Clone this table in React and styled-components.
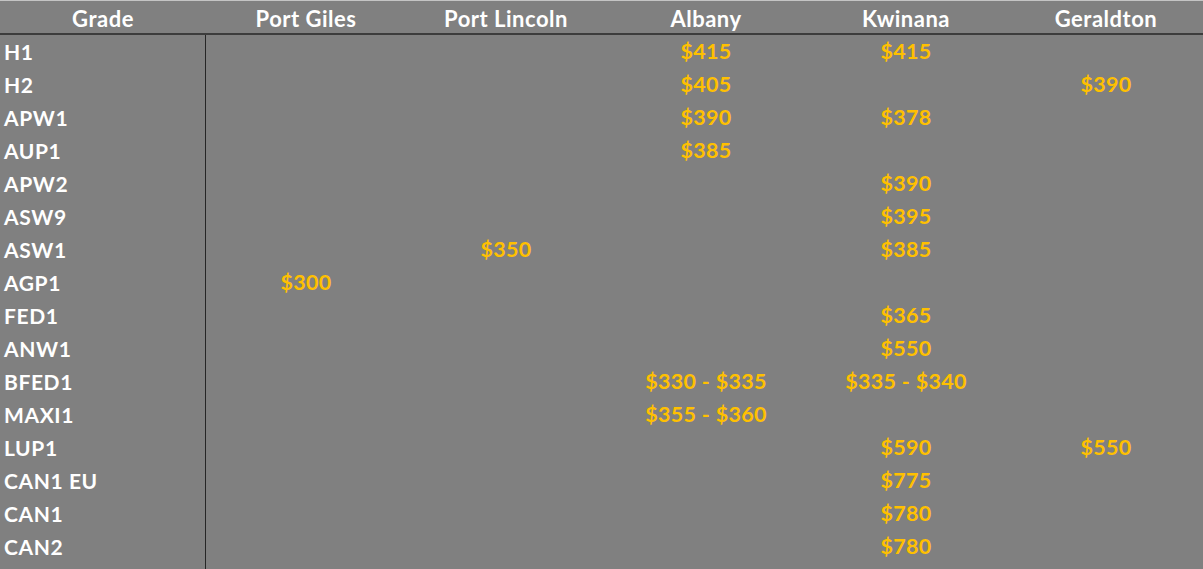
import React from "react";
import styled, { createGlobalStyle } from "styled-components";

const GlobalStyle = createGlobalStyle`
  html, body {
    margin: 0;
    padding: 0;
    background: #808080;
  }
  body {
    font-family: Lato, "Open Sans", "Liberation Sans", sans-serif;
  }
`;

const Page = styled.div`
  display: flex;
  flex-direction: column;
  height: 100vh;
  box-sizing: border-box;
  border-top: 1px solid #c4c4c4;
  background: #808080;
  overflow: hidden;
`;

const columns = `206px repeat(5, 200px)`;

const HeaderRow = styled.div`
  display: grid;
  grid-template-columns: ${columns};
  height: 34px;
  box-sizing: border-box;
  border-bottom: 2px solid #3c3c3c;
  align-items: center;
`;

const HeaderCell = styled.div`
  text-align: center;
  color: #ffffff;
  font-weight: 700;
  font-size: 22px;
  letter-spacing: 0.5px;
  line-height: 1;
  padding-top: 3px;
`;

const Body = styled.div`
  flex: 1;
  display: flex;
  flex-direction: column;
`;

const Row = styled.div`
  display: grid;
  grid-template-columns: ${columns};
  height: 33px;
  align-items: center;
`;

const Filler = styled.div`
  flex: 1;
  display: grid;
  grid-template-columns: ${columns};
`;

const GradeCell = styled.div`
  align-self: stretch;
  display: flex;
  align-items: center;
  box-sizing: border-box;
  border-right: 1px solid #262626;
  padding-left: 4px;
  color: #ffffff;
  font-weight: 700;
  font-size: 21px;
  letter-spacing: 0.6px;
  line-height: 1;
`;

const PriceCell = styled.div`
  text-align: center;
  color: #ffc000;
  font-weight: 700;
  font-size: 21.5px;
  letter-spacing: 0.3px;
  line-height: 1;
  white-space: nowrap;
`;

const ports = ["Port Giles", "Port Lincoln", "Albany", "Kwinana", "Geraldton"];

const data = [
  ["H1", { Albany: "$415", Kwinana: "$415" }],
  ["H2", { Albany: "$405", Geraldton: "$390" }],
  ["APW1", { Albany: "$390", Kwinana: "$378" }],
  ["AUP1", { Albany: "$385" }],
  ["APW2", { Kwinana: "$390" }],
  ["ASW9", { Kwinana: "$395" }],
  ["ASW1", { "Port Lincoln": "$350", Kwinana: "$385" }],
  ["AGP1", { "Port Giles": "$300" }],
  ["FED1", { Kwinana: "$365" }],
  ["ANW1", { Kwinana: "$550" }],
  ["BFED1", { Albany: "$330 - $335", Kwinana: "$335 - $340" }],
  ["MAXI1", { Albany: "$355 - $360" }],
  ["LUP1", { Kwinana: "$590", Geraldton: "$550" }],
  ["CAN1 EU", { Kwinana: "$775" }],
  ["CAN1", { Kwinana: "$780" }],
  ["CAN2", { Kwinana: "$780" }],
];

export default function App() {
  return (
    <>
      <GlobalStyle />
      <Page>
        <HeaderRow>
          <HeaderCell>Grade</HeaderCell>
          {ports.map((p) => (
            <HeaderCell key={p}>{p}</HeaderCell>
          ))}
        </HeaderRow>
        <Body>
          {data.map(([grade, prices]) => (
            <Row key={grade}>
              <GradeCell>{grade}</GradeCell>
              {ports.map((p) => (
                <PriceCell key={p}>{prices[p] || ""}</PriceCell>
              ))}
            </Row>
          ))}
          <Filler>
            <GradeCell />
          </Filler>
        </Body>
      </Page>
    </>
  );
}
